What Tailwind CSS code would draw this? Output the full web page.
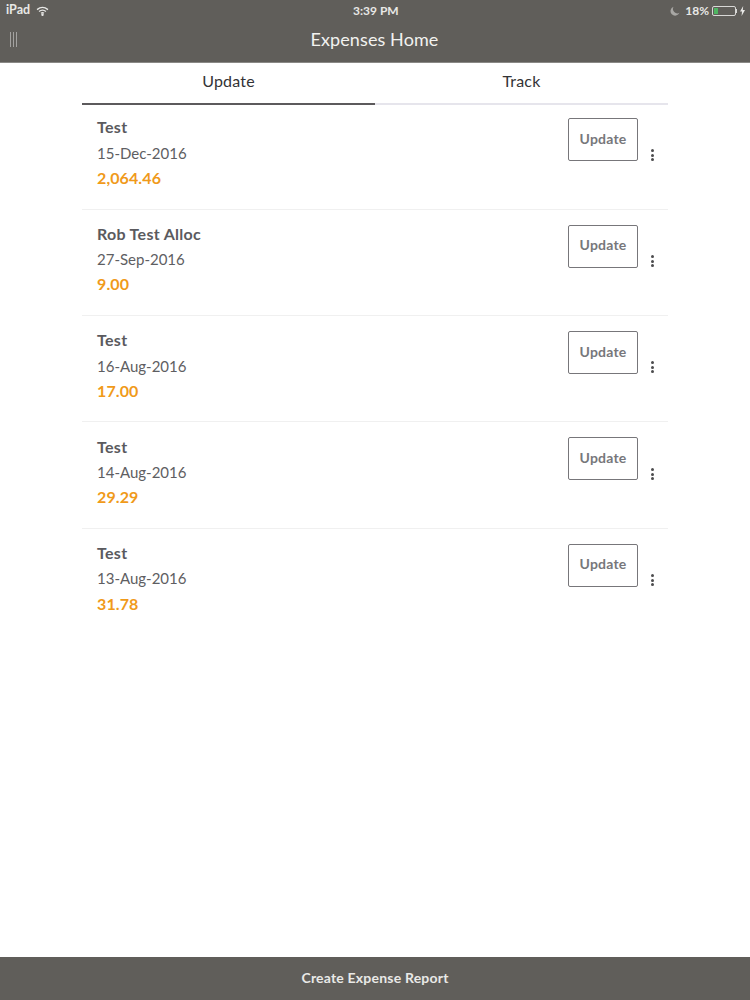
<!DOCTYPE html>
<html lang="en">
<head>
  <meta charset="UTF-8" />
  <title>Expenses Home</title>
  <script src="https://cdn.jsdelivr.net/npm/@tailwindcss/browser@4"></script>
</head>
<body class="bg-white w-[750px] h-[1000px] overflow-hidden flex flex-col font-['Lato',sans-serif]">
  <!-- status bar + title -->
  <header class="bg-[#605e5a] h-[63px] shrink-0 text-white border-b border-[#8a8986]">
    <div class="h-[21px] flex items-center justify-between pl-[6px] pr-[5px] relative">
      <div class="flex items-center gap-[6px] text-[12.5px] font-bold text-[#e8e8e6]">
        <span>iPad</span>
        <svg width="13" height="10" viewBox="0 0 14 11" fill="none" stroke="#e8e8e6" stroke-width="1.5"><path d="M1 4 Q7 -1 13 4"/><path d="M3.2 6 Q7 3 10.8 6"/><path d="M5.4 8 Q7 6.8 8.6 8"/><circle cx="7" cy="9.6" r=".6" fill="#e8e8e6"/></svg>
      </div>
      <span class="absolute left-[353px] text-[12px] font-bold text-[#e8e8e6]">3:39 PM</span>
      <div class="flex items-center text-[12px] font-bold text-[#e8e8e6]">
        <svg width="10" height="10" viewBox="0 0 10 10" class="mr-[5px]"><path d="M3.5 0.8 A4.6 4.6 0 1 0 9.4 6.8 A4.4 4.4 0 0 1 3.5 0.8Z" fill="#a8a7a4"/></svg>
        <span class="mr-[3px]">18%</span>
        <div class="w-[24px] h-[10px] border border-[#d8d8d6] rounded-[2px] p-[1px]">
          <div class="w-[4px] h-full bg-[#4fb562]"></div>
        </div>
        <div class="w-[1px] h-[4px] bg-[#d8d8d6] mr-[3px]"></div>
        <svg width="5" height="10" viewBox="0 0 5 10"><path d="M3.2 0 L0 5.6 H2 L1.6 10 L5 4 H2.8Z" fill="#e8e8e6"/></svg>
      </div>
    </div>
    <div class="h-[41px] flex items-center justify-center relative">
      <div class="absolute left-[10px] top-[11px] flex gap-[2px]">
        <div class="w-[1px] h-[15px] bg-[#a3a2a0]"></div>
        <div class="w-[1px] h-[15px] bg-[#a3a2a0]"></div>
        <div class="w-[1px] h-[15px] bg-[#a3a2a0]"></div>
      </div>
      <h1 class="text-[18px] tracking-[0.1px] text-[#f2f2f0] relative top-[-2px] pr-[1px]">Expenses Home</h1>
    </div>
  </header>

  <main class="flex-1 w-[586px] ml-[82px]">
    <!-- tabs -->
    <div class="flex h-[42px] text-[16px] tracking-[0.2px] text-[#333336]">
      <div class="flex-1 flex items-center justify-center border-b-2 border-[#5c5a5c] pb-[4px]">Update</div>
      <div class="flex-1 flex items-center justify-center border-b-2 border-[#e6e5ec] pb-[4px]">Track</div>
    </div>

    <!-- expense rows -->
    <div class="flex items-start justify-between h-[105px] pl-[15px] border-b border-[#f0f0f0]">
      <div class="pt-[9px]">
        <p class="text-[16px] leading-[25px] font-bold tracking-[0.3px] text-[#5a5a5e]">Test</p>
        <p class="text-[15px] h-[26px] leading-[28px] text-[#5e5e62]">15-Dec-2016</p>
        <p class="text-[16px] leading-[25px] font-bold tracking-[0.1px] text-[#f09a1a]">2,064.46</p>
      </div>
      <div class="flex items-start pt-[13px] pr-[1px]">
        <button class="w-[70px] h-[43px] border border-[#77767a] rounded-[2px] text-[14px] font-bold tracking-[0.2px] text-[#77777b] pb-[3px]">Update</button>
        <div class="w-[29px] pt-[31px] flex flex-col items-center gap-[1.5px]">
          <span class="w-[3px] h-[3px] bg-[#4c4c4e] rounded-full"></span>
          <span class="w-[3px] h-[3px] bg-[#4c4c4e] rounded-full"></span>
          <span class="w-[3px] h-[3px] bg-[#4c4c4e] rounded-full"></span>
        </div>
      </div>
    </div>
    <div class="flex items-start justify-between h-[106px] pl-[15px] border-b border-[#f0f0f0]">
      <div class="pt-[11px]">
        <p class="text-[16px] leading-[25px] font-bold tracking-[0.3px] text-[#5a5a5e]">Rob Test Alloc</p>
        <p class="text-[15px] h-[25px] leading-[27px] text-[#5e5e62]">27-Sep-2016</p>
        <p class="text-[16px] leading-[25px] font-bold tracking-[0.1px] text-[#f09a1a]">9.00</p>
      </div>
      <div class="flex items-start pt-[15px] pr-[1px]">
        <button class="w-[70px] h-[43px] border border-[#77767a] rounded-[2px] text-[14px] font-bold tracking-[0.2px] text-[#77777b] pb-[4px]">Update</button>
        <div class="w-[29px] pt-[30px] flex flex-col items-center gap-[1.5px]">
          <span class="w-[3px] h-[3px] bg-[#4c4c4e] rounded-full"></span>
          <span class="w-[3px] h-[3px] bg-[#4c4c4e] rounded-full"></span>
          <span class="w-[3px] h-[3px] bg-[#4c4c4e] rounded-full"></span>
        </div>
      </div>
    </div>
    <div class="flex items-start justify-between h-[106px] pl-[15px] border-b border-[#f0f0f0]">
      <div class="pt-[11px]">
        <p class="text-[16px] leading-[25px] font-bold tracking-[0.3px] text-[#5a5a5e]">Test</p>
        <p class="text-[15px] h-[26px] leading-[28px] text-[#5e5e62]">16-Aug-2016</p>
        <p class="text-[16px] leading-[25px] font-bold tracking-[0.1px] text-[#f09a1a]">17.00</p>
      </div>
      <div class="flex items-start pt-[15px] pr-[1px]">
        <button class="w-[70px] h-[43px] border border-[#77767a] rounded-[2px] text-[14px] font-bold tracking-[0.2px] text-[#77777b] pb-[3px]">Update</button>
        <div class="w-[29px] pt-[30px] flex flex-col items-center gap-[1.5px]">
          <span class="w-[3px] h-[3px] bg-[#4c4c4e] rounded-full"></span>
          <span class="w-[3px] h-[3px] bg-[#4c4c4e] rounded-full"></span>
          <span class="w-[3px] h-[3px] bg-[#4c4c4e] rounded-full"></span>
        </div>
      </div>
    </div>
    <div class="flex items-start justify-between h-[107px] pl-[15px] border-b border-[#f0f0f0]">
      <div class="pt-[12px]">
        <p class="text-[16px] leading-[25px] font-bold tracking-[0.3px] text-[#5a5a5e]">Test</p>
        <p class="text-[15px] h-[25px] leading-[27px] text-[#5e5e62]">14-Aug-2016</p>
        <p class="text-[16px] leading-[25px] font-bold tracking-[0.1px] text-[#f09a1a]">29.29</p>
      </div>
      <div class="flex items-start pt-[15px] pr-[1px]">
        <button class="w-[70px] h-[43px] border border-[#77767a] rounded-[2px] text-[14px] font-bold tracking-[0.2px] text-[#77777b] pb-[3px]">Update</button>
        <div class="w-[29px] pt-[31px] flex flex-col items-center gap-[1.5px]">
          <span class="w-[3px] h-[3px] bg-[#4c4c4e] rounded-full"></span>
          <span class="w-[3px] h-[3px] bg-[#4c4c4e] rounded-full"></span>
          <span class="w-[3px] h-[3px] bg-[#4c4c4e] rounded-full"></span>
        </div>
      </div>
    </div>
    <div class="flex items-start justify-between h-[106px] pl-[15px]">
      <div class="pt-[11px]">
        <p class="text-[16px] leading-[25px] font-bold tracking-[0.3px] text-[#5a5a5e]">Test</p>
        <p class="text-[15px] leading-[26px] text-[#5e5e62]">13-Aug-2016</p>
        <p class="text-[16px] leading-[25px] font-bold tracking-[0.1px] text-[#f09a1a]">31.78</p>
      </div>
      <div class="flex items-start pt-[15px] pr-[1px]">
        <button class="w-[70px] h-[43px] border border-[#77767a] rounded-[2px] text-[14px] font-bold tracking-[0.2px] text-[#77777b] pb-[4px]">Update</button>
        <div class="w-[29px] pt-[30px] flex flex-col items-center gap-[1.5px]">
          <span class="w-[3px] h-[3px] bg-[#4c4c4e] rounded-full"></span>
          <span class="w-[3px] h-[3px] bg-[#4c4c4e] rounded-full"></span>
          <span class="w-[3px] h-[3px] bg-[#4c4c4e] rounded-full"></span>
        </div>
      </div>
    </div>
  </main>

  <footer class="h-[43px] shrink-0 bg-[#605e5a] flex items-center justify-center text-[14px] font-bold text-[#e9e9e7] tracking-[0.2px] pb-[2px]">Create Expense Report</footer>
</body>
</html>
